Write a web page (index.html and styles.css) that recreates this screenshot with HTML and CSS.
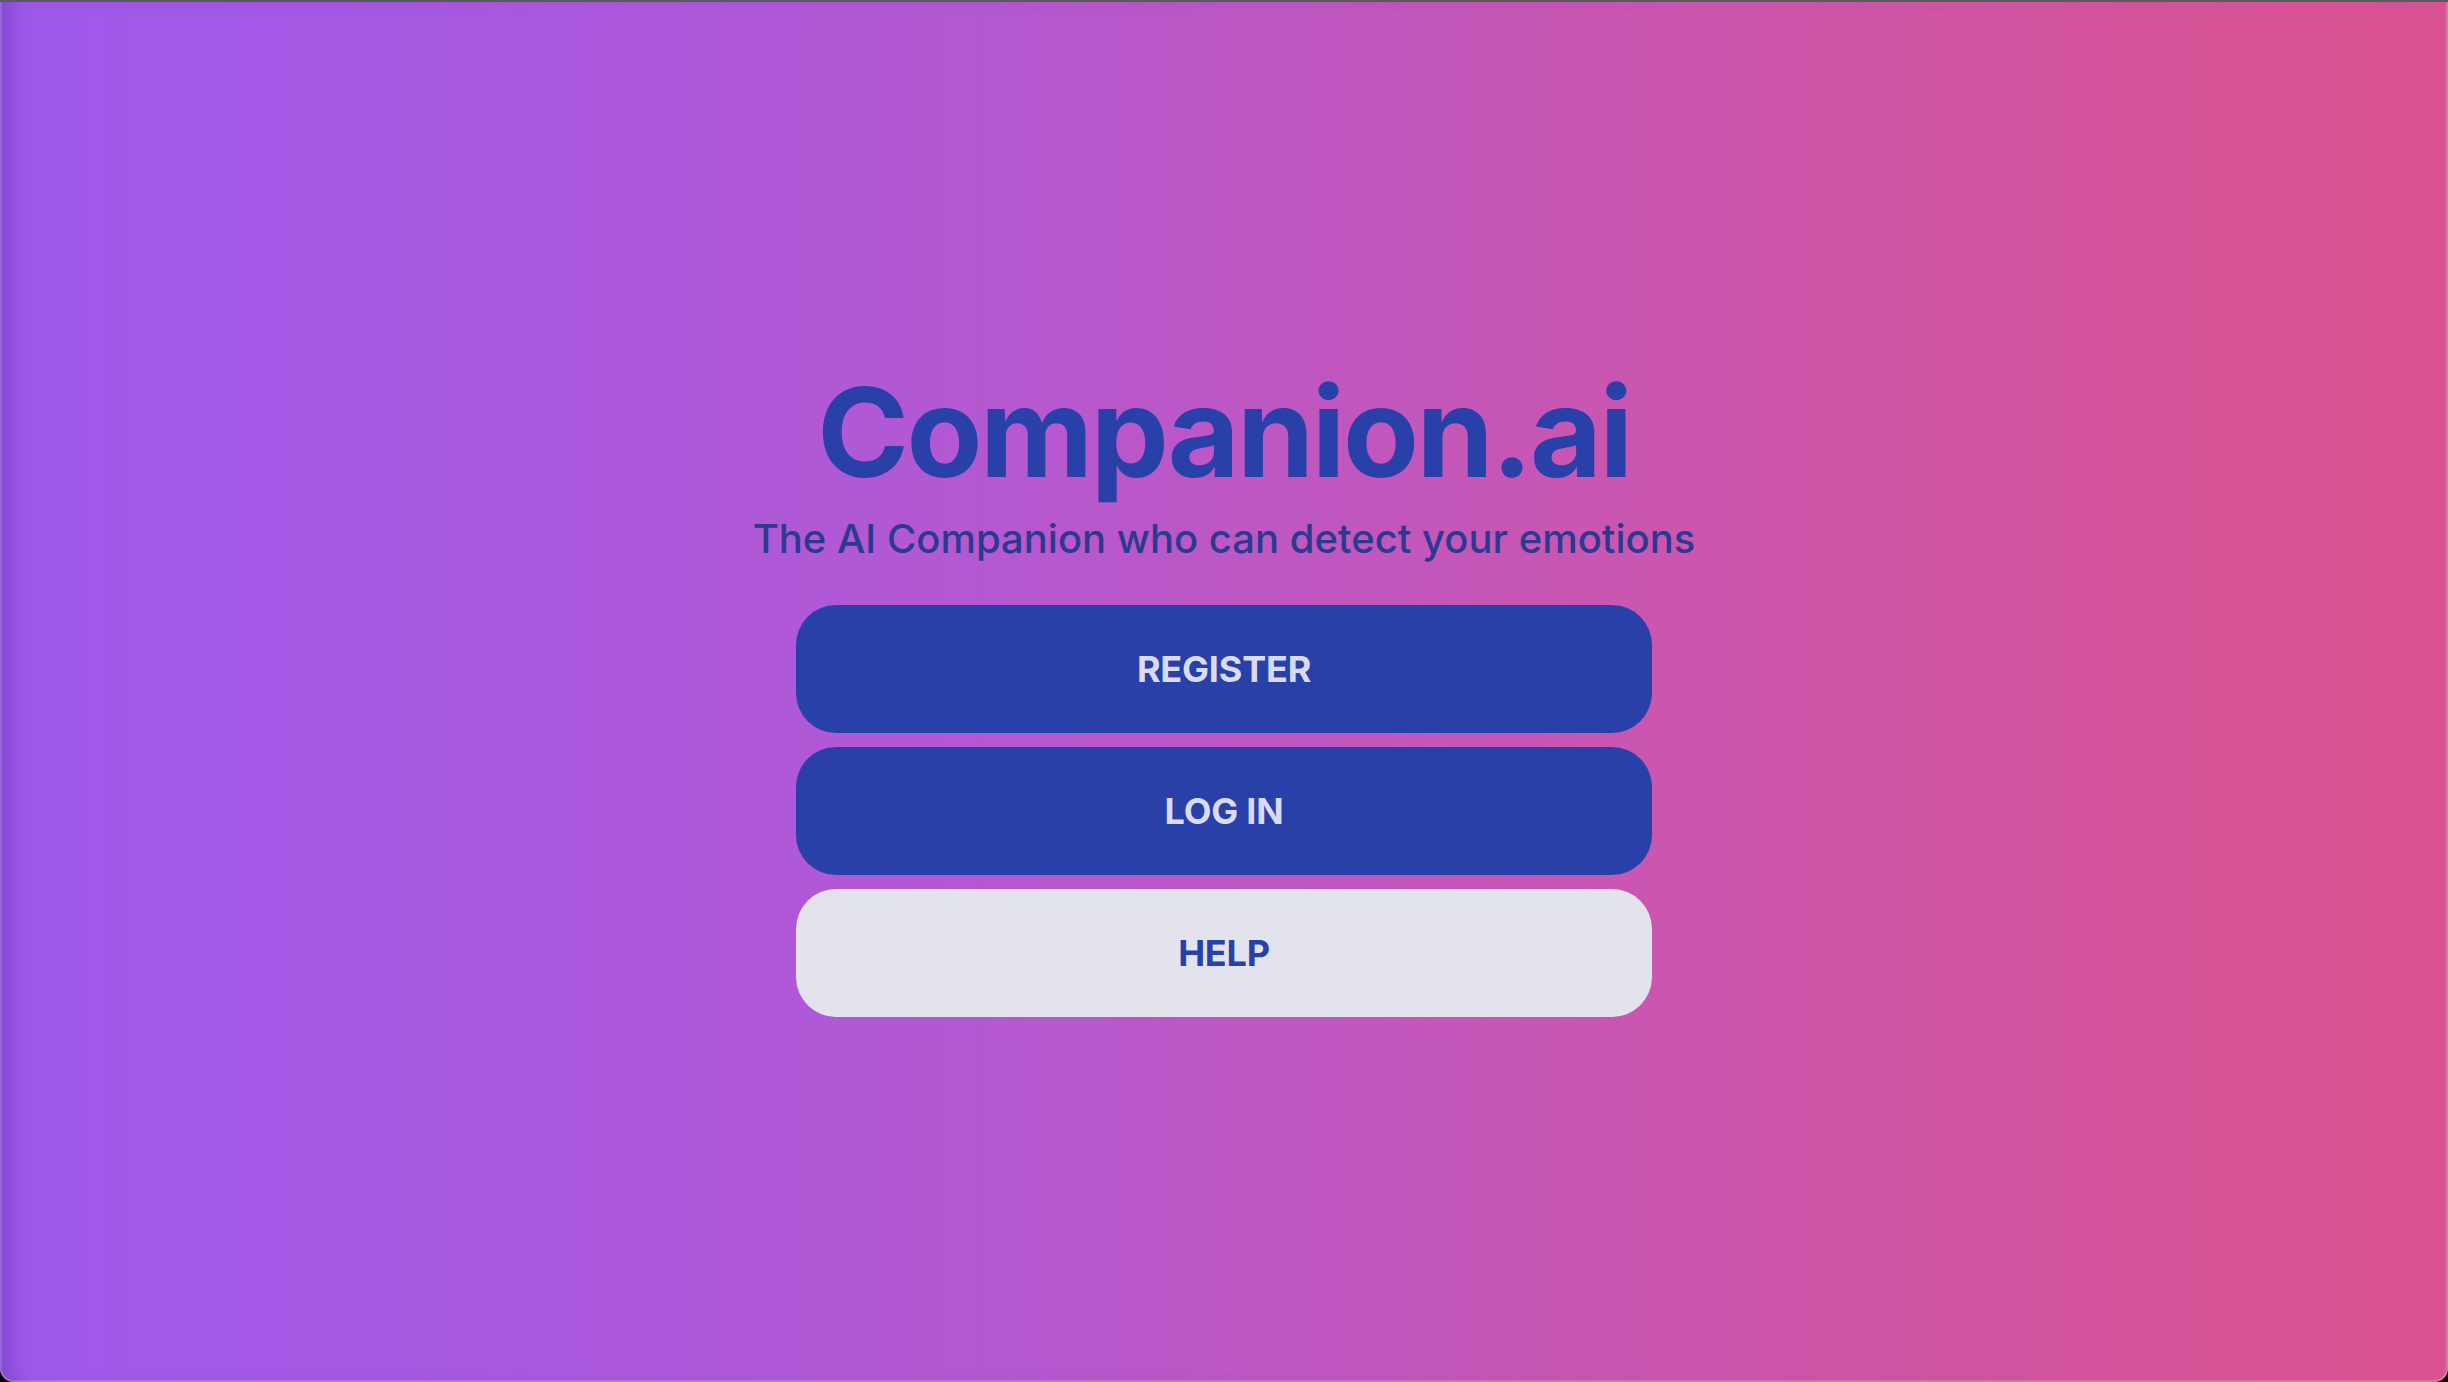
FILE: index.html
```html
<!DOCTYPE html>
<html lang="en">
<head>
<meta charset="utf-8">
<title>Companion.ai</title>
<link rel="stylesheet" href="styles.css">
</head>
<body>
<div class="window">
  <main class="hero">
    <h1 class="title">Companion.ai</h1>
    <p class="subtitle">The AI Companion who can detect your emotions</p>
    <div class="actions">
      <button class="btn btn-primary">REGISTER</button>
      <button class="btn btn-primary">LOG IN</button>
      <button class="btn btn-light">HELP</button>
    </div>
  </main>
</div>
</body>
</html>
```
FILE: styles.css
```css
html, body {
  margin: 0;
  padding: 0;
  height: 100%;
  background: #000;
}
body {
  font-family: Inter, "Noto Sans", sans-serif;
}
.window {
  box-sizing: border-box;
  height: 1382px;
  border-top: 2px solid #5a5a5a;
  border-radius: 0 0 14px 14px;
  background: linear-gradient(to right, #9d59e8 0%, #a358e6 10%, #b458d2 40%, #c856b2 65%, #d65498 90%, #da5392 100%);
  box-shadow: inset 22px 0 22px -14px rgba(70, 30, 150, 0.35), inset 2px 0 0 rgba(255,255,255,0.25), inset -2px 0 0 rgba(255,255,255,0.2), inset 0 -2px 0 rgba(255,255,255,0.2);
  display: flex;
  align-items: center;
  justify-content: center;
}
.hero {
  display: flex;
  flex-direction: column;
  align-items: center;
  padding-top: 1px;
}
.title {
  margin: 0;
  font-size: 124px;
  line-height: 128px;
  font-weight: 700;
  color: #2840a8;
  letter-spacing: -2.5px;
}
.subtitle {
  margin: 13px 0 0;
  font-size: 40px;
  line-height: 60px;
  font-weight: 500;
  color: #2b3a8e;
}
.actions {
  margin-top: 36px;
  width: 856px;
  display: flex;
  flex-direction: column;
  gap: 14px;
}
.btn {
  height: 128px;
  border: none;
  border-radius: 40px;
  font-family: Inter, "Noto Sans", sans-serif;
  font-size: 36px;
  font-weight: 700;
  letter-spacing: -0.2px;
  cursor: pointer;
}
.btn-primary {
  background: #2840a8;
  color: #d9dbf5;
}
.btn-light {
  background: #e3e3ee;
  color: #2840a8;
}
```
